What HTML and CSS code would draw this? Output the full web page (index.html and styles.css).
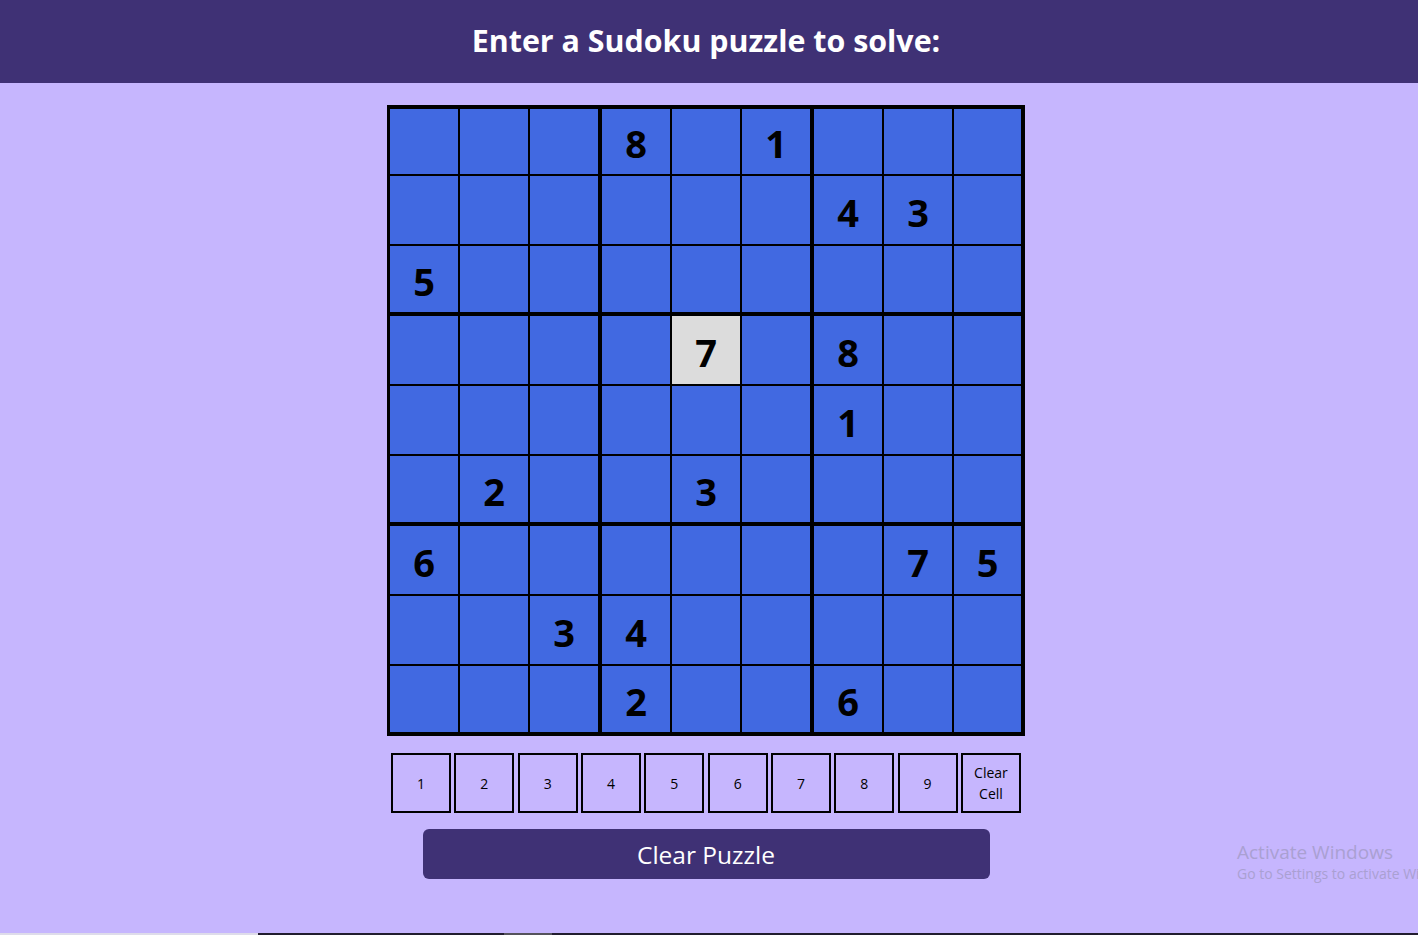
FILE: index.html
```html
<!DOCTYPE html>
<html lang="en">
<head>
<meta charset="utf-8">
<title>Sudoku Solver</title>
<link rel="stylesheet" href="styles.css">
</head>
<body>
<header class="topbar">
  <h1 class="title">Enter a Sudoku puzzle to solve:</h1>
</header>
<main class="page">
  <div class="board">
    <div class="cell"></div><div class="cell"></div><div class="cell"></div><div class="cell">8</div><div class="cell"></div><div class="cell">1</div><div class="cell"></div><div class="cell"></div><div class="cell"></div>
    <div class="cell"></div><div class="cell"></div><div class="cell"></div><div class="cell"></div><div class="cell"></div><div class="cell"></div><div class="cell">4</div><div class="cell">3</div><div class="cell"></div>
    <div class="cell">5</div><div class="cell"></div><div class="cell"></div><div class="cell"></div><div class="cell"></div><div class="cell"></div><div class="cell"></div><div class="cell"></div><div class="cell"></div>
    <div class="cell"></div><div class="cell"></div><div class="cell"></div><div class="cell"></div><div class="cell selected">7</div><div class="cell"></div><div class="cell">8</div><div class="cell"></div><div class="cell"></div>
    <div class="cell"></div><div class="cell"></div><div class="cell"></div><div class="cell"></div><div class="cell"></div><div class="cell"></div><div class="cell">1</div><div class="cell"></div><div class="cell"></div>
    <div class="cell"></div><div class="cell">2</div><div class="cell"></div><div class="cell"></div><div class="cell">3</div><div class="cell"></div><div class="cell"></div><div class="cell"></div><div class="cell"></div>
    <div class="cell">6</div><div class="cell"></div><div class="cell"></div><div class="cell"></div><div class="cell"></div><div class="cell"></div><div class="cell"></div><div class="cell">7</div><div class="cell">5</div>
    <div class="cell"></div><div class="cell"></div><div class="cell">3</div><div class="cell">4</div><div class="cell"></div><div class="cell"></div><div class="cell"></div><div class="cell"></div><div class="cell"></div>
    <div class="cell"></div><div class="cell"></div><div class="cell"></div><div class="cell">2</div><div class="cell"></div><div class="cell"></div><div class="cell">6</div><div class="cell"></div><div class="cell"></div>
  </div>
  <div class="pad">
    <button class="key">1</button>
    <button class="key">2</button>
    <button class="key">3</button>
    <button class="key">4</button>
    <button class="key">5</button>
    <button class="key">6</button>
    <button class="key">7</button>
    <button class="key">8</button>
    <button class="key">9</button>
    <button class="key">Clear Cell</button>
  </div>
  <button class="clear-puzzle">Clear Puzzle</button>
</main>
<div class="watermark">
  <div class="wm-title">Activate Windows</div>
  <div class="wm-sub">Go to Settings to activate Windows.</div>
</div>
<div class="taskbar-edge">
  <div class="edge-light"></div>
  <div class="edge-dark"></div>
  <div class="edge-mid"></div>
  <div class="edge-dark edge-fill"></div>
</div>
</body>
</html>
```

FILE: styles.css
```css
html, body {
  margin: 0;
  padding: 0;
}
body {
  background: #c6b6fe;
  font-family: "Open Sans", "Noto Sans", sans-serif;
  width: 1418px;
  height: 935px;
  overflow: hidden;
  position: relative;
}
.topbar {
  background: #3f3175;
  height: 83px;
  display: flex;
  align-items: center;
  justify-content: center;
  padding-right: 6px;
}
.title {
  margin: 0;
  color: #ffffff;
  font-size: 30.4px;
  font-weight: 700;
  letter-spacing: 0;
  line-height: 1;
}
.page {
  display: flex;
  flex-direction: column;
  align-items: center;
  padding-top: 22px;
  padding-right: 6px;
}
.board {
  background: #000000;
  display: grid;
  grid-template-columns: 68px 68px 70px 68px 68px 70px 68px 68px 67px;
  grid-template-rows: 65px 68px 68px 68px 68px 68px 68px 68px 66px;
  column-gap: 2px;
  row-gap: 2px;
  padding: 4px 4px 4px 3px;
}
.cell {
  background: #4169e1;
  box-sizing: border-box;
  display: flex;
  align-items: center;
  justify-content: center;
  font-size: 38px;
  font-weight: 700;
  color: #000000;
  padding-top: 3px;
}
.cell:nth-child(9n+3),
.cell:nth-child(9n+6) {
  border-right: 2px solid #000000;
}
.cell:nth-child(n+19):nth-child(-n+27),
.cell:nth-child(n+46):nth-child(-n+54) {
  border-bottom: 2px solid #000000;
}
.cell.selected {
  background: #dcdcdc;
}
.pad {
  width: 630px;
  margin-top: 17px;
  display: flex;
  justify-content: space-between;
}
.key {
  width: 60px;
  height: 60px;
  box-sizing: border-box;
  background: transparent;
  border: 2px solid #000000;
  padding: 0 6px;
  font-family: "Open Sans", "Noto Sans", sans-serif;
  font-size: 14px;
  line-height: 21px;
  color: #000000;
}
.clear-puzzle {
  margin-top: 16px;
  width: 567px;
  height: 50px;
  border: none;
  border-radius: 6px;
  background: #3f3175;
  color: #ffffff;
  font-family: "Open Sans", "Noto Sans", sans-serif;
  font-size: 24.5px;
  letter-spacing: 0;
  padding: 0;
}
.watermark {
  position: absolute;
  left: 1237px;
  top: 839px;
  color: #aaa0d2;
  white-space: nowrap;
  font-family: "Open Sans", "Noto Sans", sans-serif;
}
.wm-title {
  font-size: 19px;
  line-height: 26px;
}
.wm-sub {
  font-size: 14px;
  line-height: 18px;
}
.taskbar-edge {
  position: absolute;
  left: 0;
  right: 0;
  bottom: 0;
  height: 2px;
  display: flex;
}
.edge-light {
  width: 258px;
  background: #dedcea;
}
.edge-dark {
  width: 246px;
  background: #221d2f;
}
.edge-mid {
  width: 48px;
  background: #55535c;
}
.edge-fill {
  flex: 1;
}
```
